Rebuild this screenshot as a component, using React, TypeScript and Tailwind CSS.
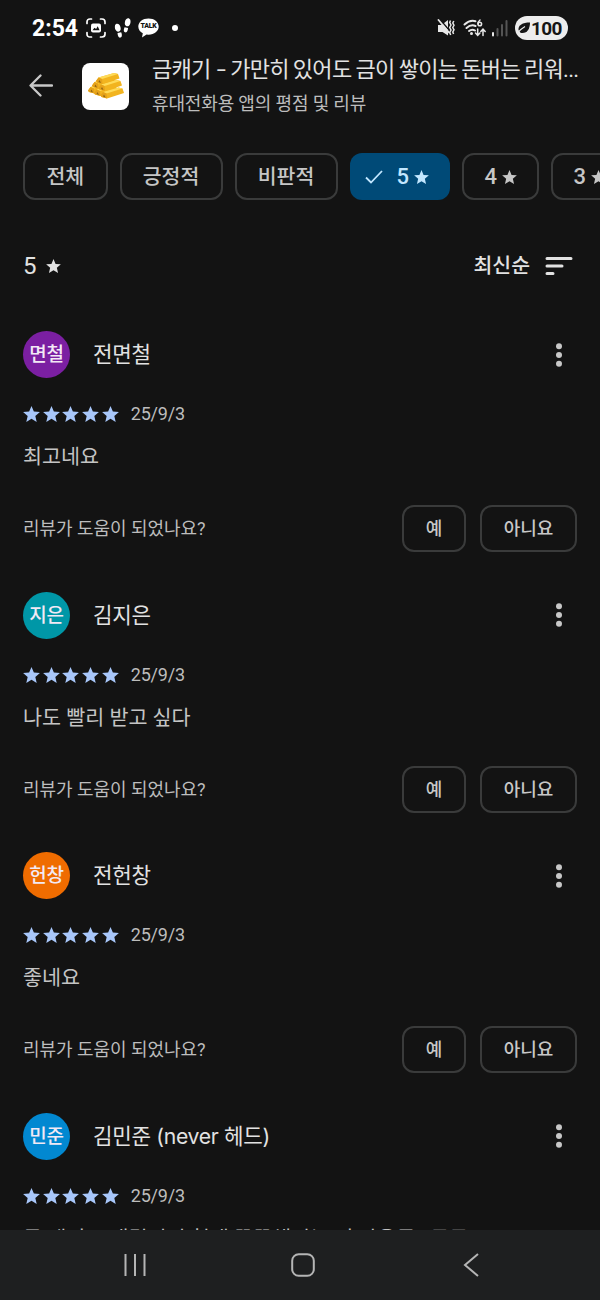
import React from 'react';

interface Review {
  id: number;
  initials: string;
  name: string;
  color: string;
  date: string;
  text: string;
}

const reviews: Review[] = [
  { id: 1, initials: '면철', name: '전면철', color: 'bg-[#7b1fa2]', date: '25/9/3', text: '최고네요' },
  { id: 2, initials: '지은', name: '김지은', color: 'bg-[#0097a7]', date: '25/9/3', text: '나도 빨리 받고 싶다' },
  { id: 3, initials: '헌창', name: '전헌창', color: 'bg-[#ef6c00]', date: '25/9/3', text: '좋네요' },
  { id: 4, initials: '민준', name: '김민준 (never 헤드)', color: 'bg-[#0288d1]', date: '25/9/3', text: '금 캐기 오래걸리지 현재 꾹꾹채리는 거 사용듯? 굿굿' },
];

const Star = ({ className }: { className?: string }) => (
  <svg viewBox="2 2 20 19" fill="currentColor" className={className}>
    <path d="M12 17.270L18.180 21l-1.640-7.030L22 9.240l-7.190-.610L12 2 9.190 8.630 2 9.240l5.460 4.730L5.820 21z" />
  </svg>
);

const StatusBar = () => (
  <div className="flex h-14 items-center justify-between px-8">
    <div className="flex items-center text-white">
      <span className="w-[54px] text-[23px] font-bold leading-none">2:54</span>
      <svg viewBox="0 0 20 20" className="h-5 w-5" fill="none" stroke="currentColor" strokeWidth="1.7" strokeLinecap="round">
        <path d="M1 5.500V4q0-3 3-3h1.500M14.500 1H16q3 0 3 3v1.500M19 14.500V16q0 3-3 3h-1.500M5.500 19H4q-3 0-3-3v-1.500" />
        <rect x="5" y="5.500" width="10" height="9" rx="2" fill="currentColor" stroke="none" />
        <path d="M6.500 12.200l2-2.500 1.600 1.200 1.600-2.600 1.900 3.900z" fill="#131313" stroke="none" />
      </svg>
      <svg viewBox="0 0 18 22" className="ml-2 h-[22px] w-[18px]" fill="currentColor">
        <path d="M1 8.500C1.500 6 5 6 6 8.800c.8 2 1.200 4-.2 5.200-1 .8-2.300.8-3 .2C1 13 .6 10.500 1 8.500z" />
        <path d="M3.500 16l3.600-.8c1 1.800 1.200 4.800-.6 5.400-2 .6-2.800-2-3-4.600z" />
        <path d="M16.300 2.800c-1-2.600-4.300-2-5 .8-.6 2-.9 4.200.5 5.200 1 .8 2.400.7 3.200 0 1.500-1.200 1.900-4 1.300-6z" />
        <path d="M10.600 10.200l3.500.9c-.2 2.400-1.200 4.900-3 4.200-1.800-.6-1.400-3.200-.5-5.100z" />
      </svg>
      <div className="relative ml-[6px] h-5 w-[21px]">
        <svg viewBox="0 0 21 20" className="h-5 w-[21px]" fill="currentColor">
          <path d="M10.500.5C4.700.5.300 4 .300 8.600c0 2.900 1.700 5.300 4.500 6.700L4 19.500l4.500-2.900 2 .1c5.800 0 10.200-3.500 10.200-8.100S16.300.5 10.500.5z" />
        </svg>
        <span className="absolute inset-x-0 top-[5px] text-center text-[7px] font-black leading-[7px] tracking-[-0.3px] text-[#131313]">TALK</span>
      </div>
      <span className="ml-[13px] h-[6px] w-[6px] rounded-full bg-white" />
    </div>

    <div className="flex items-center text-[#e8e8e8]">
      <svg viewBox="0 0 18 18" className="h-[18px] w-[18px]" fill="currentColor">
        <path d="M1 6h3.500L11 1v15.500L5.500 13H1z" />
        <path d="M2.500 0l9.500 11" stroke="#131313" strokeWidth="1.500" />
        <path d="M1.500 1l10.500 12.500" fill="none" stroke="currentColor" strokeWidth="1.800" strokeLinecap="round" />
        <path d="M13.500 1.500l-.8 2 1.300 2.500-1.300 2.500 1.300 2.500-1.300 2.500 1 2.500M16.800 2l-1 2 1.200 2.300-1.200 2.200 1.200 2.300-1.200 2.200.8 2" fill="none" stroke="currentColor" strokeWidth="1.500" />
      </svg>
      <svg viewBox="0 0 24 20" className="ml-2 h-5 w-6" fill="none" stroke="currentColor" strokeWidth="2" strokeLinecap="round">
        <path d="M1.500 6.500Q7 1.500 12.500 3.200M3.500 10q4.500-4 9-2M6 13q3-2.300 6-.5" />
        <circle cx="8.500" cy="15.500" r="1.500" fill="currentColor" stroke="none" />
        <path d="M17 2q-2 1.500-2 4" strokeWidth="1.500" />
        <circle cx="16.800" cy="6" r="1.800" strokeWidth="1.500" />
        <path d="M14.700 11v6M12.500 15l2.200 2.300 2.200-2.300M20 17.500v-6M17.800 13.500l2.200-2.300 2.200 2.300" strokeWidth="1.500" />
      </svg>
      <svg viewBox="0 0 17 18" className="ml-1 h-[18px] w-[17px]" fill="currentColor">
        <rect x="1" y="13" width="2" height="4.500" rx="1" />
        <g fill="#555">
          <rect x="5.500" y="9" width="2" height="8.500" rx="1" />
          <rect x="10" y="5" width="2" height="12.500" rx="1" />
          <rect x="14.500" y="1" width="2" height="16.500" rx="1" />
        </g>
      </svg>
      <div className="ml-[7px] flex h-6 w-[53px] items-center rounded-full bg-[#ededed] pl-[2px] text-[#161616]">
        <svg viewBox="0 0 14 12" className="h-3 w-[14px] shrink-0">
          <path d="M1.500 8C1 3 5.500.5 13 .5c0 6.500-3 11.500-9.500 10.300z" fill="currentColor" />
          <path d="M0 11.500q3-4 8-7" fill="none" stroke="#ededed" strokeWidth="1.200" />
        </svg>
        <span className="text-[19px] font-bold leading-none tracking-[-0.6px]">100</span>
      </div>
    </div>
  </div>
);

// front-left corner of every bar, bottom row first
const bars = [
  [0, 14],
  [6, 16.5],
  [12.500, 19],
  [4, 9],
  [10.500, 11.500],
  [8, 4.500],
];

const GoldBars = () => (
  <svg viewBox="0 0 36 26" className="h-[26px] w-9">
    {bars.map(([x, y]) => (
      <g key={`${x}-${y}`} transform={`translate(${x} ${y})`}>
        <path d="M0 3.500L2.500 0 18-4.500l4 1 1.500 4.500L6.500 6.500 1 5z" fill="#f2b41f" />
        <path d="M2.500 0L18-4.500l4 1L6 1.500z" fill="#ffdb58" />
        <path d="M0 3.500L2.500 0 6 1.500l.5 5L1 5z" fill="#e5a21a" />
        <path d="M2.500 4.500l1-2 1.500 3z" fill="#8f6415" />
      </g>
    ))}
  </svg>
);

const AppHeader = () => (
  <header className="flex h-[60px] items-center">
    <svg viewBox="0 0 24 24" className="ml-[29px] h-6 w-6 text-[#c8c8c8]" fill="none" stroke="currentColor" strokeWidth="2.300" strokeLinecap="round" strokeLinejoin="round">
      <path d="M23 11.500H2.500M11.500 1.500l-10 10 10 10" />
    </svg>
    <div className="ml-[29px] flex h-[47px] w-[47px] items-center justify-center rounded-[8px] bg-white">
      <GoldBars />
    </div>
    <div className="ml-[23px] w-[430px] whitespace-nowrap">
      <h1 className="text-[22px] leading-[32px] tracking-[-0.7px] text-[#e2e2e2] [word-spacing:-0.7px]">
        금캐기 <span className="mx-[3px] inline-block scale-x-150">-</span> 가만히 있어도 금이 쌓이는 돈버는 리워...
      </h1>
      <p className="mt-[4px] text-[18px] leading-[28px] tracking-[-0.15px] text-[#bdbdbd]">휴대전화용 앱의 평점 및 리뷰</p>
    </div>
  </header>
);

const chip = 'flex h-[47px] shrink-0 items-center justify-center rounded-[12px] border-2 border-[#3a3b3b] text-[20.500px] font-medium text-[#c6c6c6]';

const Filters = () => (
  <div className="mt-[37px] flex gap-3 overflow-hidden pl-[23px]">
    <div className={`${chip} w-[84.500px] pt-[2px]`}>전체</div>
    <div className={`${chip} w-[103px] pt-[2px]`}>긍정적</div>
    <div className={`${chip} w-[103px] pt-[2px]`}>비판적</div>
    <div className="flex h-[47px] w-[100.500px] shrink-0 items-center rounded-[12px] bg-[#004a77] pl-[15px] text-[22px] font-medium text-[#c2e7ff]">
      <svg viewBox="0 0 18 14" className="h-[14px] w-[18px]" fill="none" stroke="currentColor" strokeWidth="1.800">
        <path d="M1 7.500l5 5L17 1" />
      </svg>
      <span className="ml-[14px] w-[17px]">5</span>
      <Star className="h-[14px] w-[15px]" />
    </div>
    <div className={`${chip} w-[77px]`}>
      <span className="w-[17px] text-[22px]">4</span>
      <Star className="h-[14px] w-[15px]" />
    </div>
    <div className={`${chip} w-[77px]`}>
      <span className="w-[17px] text-[22px]">3</span>
      <Star className="h-[14px] w-[15px]" />
    </div>
  </div>
);

const button = 'h-[47px] rounded-[12px] border-2 border-[#3a3b3b] text-[18px] font-medium text-[#c8c8c8]';

const ReviewCard = ({ review, showHelpful }: { review: Review; showHelpful: boolean }) => (
  <article className="h-[260.500px] px-[23px]">
    <div className="flex h-[47px] items-center">
      <div className={`flex h-[47px] w-[47px] items-center justify-center rounded-full pt-[2px] text-[19px] font-medium tracking-[-0.3px] text-[#f2e9f5] ${review.color}`}>
        {review.initials}
      </div>
      <span className="ml-[23px] pt-px font-['Inter','Noto_Sans_CJK_KR',sans-serif] text-[21.200px] tracking-[-0.3px] text-[#e2e2e2]">{review.name}</span>
      <svg viewBox="0 0 6 24" className="ml-auto mr-[15px] h-6 w-[6px] fill-[#c8c8c8]">
        <circle cx="3" cy="3.200" r="3" />
        <circle cx="3" cy="12" r="3" />
        <circle cx="3" cy="20.800" r="3" />
      </svg>
    </div>
    <div className="mt-[22px] flex h-[26px] items-center">
      <div className="flex gap-[2.700px] pt-[2px] text-[#a8c7fa]">
        {[1, 2, 3, 4, 5].map((i) => (
          <Star key={i} className="h-4 w-[17px]" />
        ))}
      </div>
      <span className="ml-3 pt-px text-[18px] tracking-[-0.2px] text-[#bdbdbd]">{review.date}</span>
    </div>
    <p className="mt-[14px] whitespace-nowrap text-[20.700px] leading-[34px] text-[#c4c4c4]">{review.text}</p>
    {showHelpful && (
      <div className="mt-[31px] flex h-[47px] items-center">
        <span className="text-[18px] tracking-[-0.05px] text-[#bdbdbd]">리뷰가 도움이 되었나요?</span>
        <button className={`${button} ml-auto w-16`}>예</button>
        <button className={`${button} ml-[14px] w-[97px]`}>아니요</button>
      </div>
    )}
  </article>
);

const NavigationBar = () => (
  <nav className="flex h-[70px] shrink-0 items-center bg-[#1e1f20] text-[#b5b5b5]">
    <svg viewBox="0 0 24 24" className="ml-[123px] h-6 w-6" fill="none" stroke="currentColor" strokeWidth="2">
      <path d="M2.500 1v22M12 1v22M21.500 1v22" />
    </svg>
    <svg viewBox="0 0 24 24" className="ml-[144px] h-6 w-6" fill="none" stroke="currentColor" strokeWidth="2">
      <rect x="1.200" y="1.200" width="21.600" height="21.600" rx="6.500" />
    </svg>
    <svg viewBox="0 0 16 24" className="ml-[148px] h-6 w-4" fill="none" stroke="currentColor" strokeWidth="2">
      <path d="M15 1L2 12l13 11" />
    </svg>
  </nav>
);

export default function App() {
  return (
    <div className="flex h-[1300px] w-[600px] flex-col overflow-hidden bg-[#131313] font-['Roboto','Noto_Sans_CJK_KR',sans-serif]">
      <StatusBar />
      <AppHeader />
      <Filters />
      <div className="mt-[46px] flex h-10 shrink-0 items-center pl-[23px] pr-[27px] text-[#e2e2e2]">
        <span className="text-[24px]">5</span>
        <Star className="ml-[9px] h-[14px] w-[15px]" />
        <span className="ml-auto text-[20.500px] font-medium">최신순</span>
        <svg viewBox="0 0 28 20" className="ml-[15px] h-5 w-7" stroke="currentColor" strokeWidth="3" strokeLinecap="round">
          <path d="M2 2.500h24M2 10h15M2 17.500h6" />
        </svg>
      </div>
      <main className="mt-[45px] min-h-0 flex-1 overflow-hidden">
        {reviews.map((review, index) => (
          <ReviewCard key={review.id} review={review} showHelpful={index < reviews.length - 1} />
        ))}
      </main>
      <NavigationBar />
    </div>
  );
}
